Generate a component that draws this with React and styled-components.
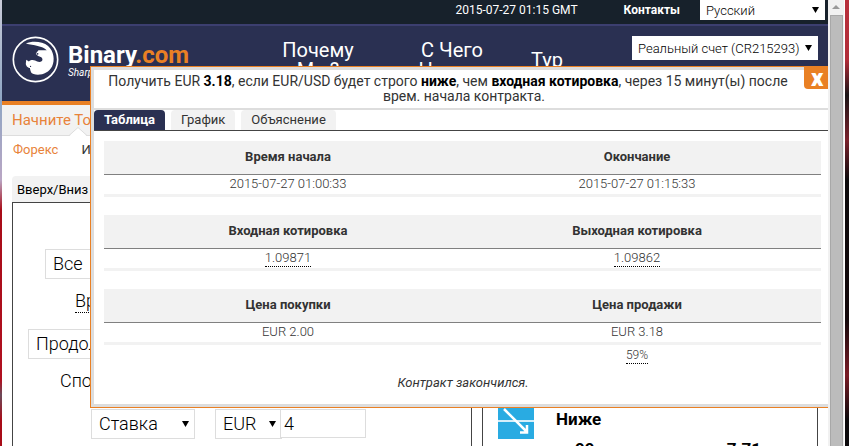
import React, { useState } from "react";
import styled, { createGlobalStyle } from "styled-components";

const GlobalStyle = createGlobalStyle`
  * {
    box-sizing: border-box;
  }
  body {
    margin: 0;
    overflow: hidden;
    font-family: Roboto, "Liberation Sans", sans-serif;
    font-weight: 300;
    color: #000;
  }
  button, select, input {
    font: inherit;
    color: inherit;
    margin: 0;
  }
`;

const Screen = styled.div`
  display: grid;
  grid-template-columns: 2px 1fr 17px 4px;
  height: 100vh;
`;

const LeftEdge = styled.div`
  background: linear-gradient(#c9cbd8 0, #8fa6c4 100px, #b9a6c4 180px, #a80c18 210px, #b01020 380px, #6b4a5a 395px, #a80c18 420px);
`;

const RightEdge = styled.div`
  background: linear-gradient(#b8303c 0, #b02c38 60px, #1a1416 95px, #7a222c 140px, #0c0a0c 180px, #14090c 320px, #7a1c26 375px, #0c0a0c 420px);
`;

const Scrollbar = styled.div`
  display: flex;
  flex-direction: column;
  align-items: center;
  background: #f1f1f1;
  border-right: 1px solid #fff;
`;

const ScrollArrow = styled.svg`
  width: 8px;
  height: 15px;
`;

const Thumb = styled.div`
  flex: 1;
  width: 13px;
  background: #bcbcbc;
  border: 1px solid #a8a8a8;
  border-bottom: 0;
`;

const Page = styled.div`
  position: relative;
  min-width: 0;
  overflow: hidden;
  background: #fff;
`;

const TopBar = styled.div`
  display: flex;
  justify-content: flex-end;
  align-items: center;
  height: 26px;
  padding: 0 3px 4px 0;
  background: #17212b;
  border-bottom: 2px solid #3c3f70;
  color: #fff;
  font-size: 12px;
`;

const Clock = styled.span`
  margin-right: 46px;
  font-weight: 400;
`;

const ContactLink = styled.a`
  margin-right: 20px;
  color: #fff;
  font-weight: 700;
  text-decoration: none;
`;

const SelectWrap = styled.span`
  position: relative;
  display: inline-flex;
  flex: none;
  width: ${(p) => p.$width}px;
  height: ${(p) => p.$height}px;
`;

const StyledSelect = styled.select`
  appearance: none;
  width: 100%;
  padding: 0 16px 0 ${(p) => (p.$large ? 7 : 5)}px;
  border: 1px solid ${(p) => (p.$large ? "#ddd" : "#fff")};
  border-radius: 0;
  background: #fff;
  color: #000;
  font-size: ${(p) => (p.$large ? 18 : 13)}px;
`;

const Caret = styled.svg`
  position: absolute;
  top: 50%;
  right: 6px;
  width: 7px;
  height: 6px;
  margin-top: -3px;
  pointer-events: none;
`;

const Header = styled.header`
  display: flex;
  align-items: flex-start;
  height: 79px;
  padding: 10px 10px 0;
  background: #2a3052;
  border-bottom: 4px solid #e98024;
  color: #fff;
`;

const Brand = styled.a`
  display: flex;
  gap: 9px;
  width: 239px;
  color: #fff;
  text-decoration: none;
`;

const BrandText = styled.div`
  padding-top: 7px;
`;

const BrandName = styled.div`
  font-size: 24px;
  line-height: 24px;
  font-weight: 700;

  span {
    color: #e98024;
  }
`;

const Tagline = styled.div`
  font-size: 10px;
  line-height: 12px;
  font-style: italic;
  font-weight: 400;
  white-space: nowrap;
`;

const Nav = styled.nav`
  display: flex;
  flex: 1;
  padding-top: 4px;
`;

const NavLink = styled.a`
  display: flex;
  align-items: center;
  justify-content: center;
  width: ${(p) => (p.$narrow ? 56 : 134)}px;
  min-height: 40px;
  color: #fff;
  font-size: 20px;
  font-weight: 400;
  line-height: 20px;
  text-align: center;
  text-decoration: none;
`;

const SubHeader = styled.div`
  height: 31px;
  padding: 0 10px;
  background: #f2f2f2;
  border-bottom: 1px solid #ddd;
  color: #e8833a;
  font-size: 15px;
  font-weight: 400;
  line-height: 30px;
`;

const Notch = styled.svg`
  display: block;
  width: 18px;
  height: 10px;
  margin: -9px 0 0 67px;
  position: relative;
`;

const Markets = styled.nav`
  display: flex;
  gap: 23px;
  padding: 3px 11px 0;
  height: 39px;
  font-size: 13px;
  font-weight: 400;
  line-height: 20px;

  a {
    color: #333;
    text-decoration: none;
  }
  a:first-child {
    color: #e8833a;
  }
`;

const FormTab = styled.button`
  display: block;
  height: 26px;
  margin-left: 10px;
  padding: 0 5px;
  border: 0;
  border-radius: 4px 4px 0 0;
  background: #f2f2f2;
  font-size: 13px;
  font-weight: 400;
`;

const Panels = styled.main`
  display: flex;
  gap: 10px;
  padding: 0 10px;
`;

const FormPanel = styled.form`
  flex: 1;
  height: 320px;
  padding: 46px 15px;
  border: 1px solid #444;
  font-size: 18px;
`;

const FormRow = styled.div`
  display: flex;
  align-items: flex-start;
  height: ${(p) => p.$height}px;
  padding-left: ${(p) => p.$indent}px;
  line-height: 24px;
`;

const DottedLabel = styled.label`
  height: 24px;
  border-bottom: 1px dotted #000;
`;

const AmountInput = styled.input`
  width: 86px;
  height: 29px;
  margin-left: -2px;
  padding: 0 3px;
  border: 1px solid #ddd;
  background: #fff;
  position: relative;
`;

const Gap = styled.span`
  width: 20px;
`;

const PricePanel = styled.section`
  width: 336px;
  height: 320px;
  padding: 200px 16px 0 15px;
  border: 1px solid #444;
`;

const PriceHead = styled.div`
  display: flex;
  gap: 22px;
  font-size: 17px;
  font-weight: 700;
  line-height: 32px;
`;

const PriceRow = styled.div`
  display: flex;
  justify-content: space-between;
  padding: 0 40px 0 77px;
  font-weight: 700;
  font-size: 17px;
  line-height: 20px;
`;

const Dialog = styled.section`
  position: absolute;
  top: 66px;
  left: 88px;
  right: 0;
  border: 1px solid #e98024;
  border-right: 0;
  background: #fff;
  color: #333;
  font-size: 13px;
`;

const DialogInner = styled.div`
  padding-bottom: 12px;
  border: 3px solid #ddd;
  border-right: 0;
`;

const Close = styled.button`
  float: right;
  width: 24px;
  height: 22px;
  margin: -3px 0 0 8px;
  padding: 0 0 0 7px;
  border: 0;
  border-radius: 0 0 0 4px;
  background: #e98024;
  color: #fff;
  font-size: 24px;
  font-weight: 900;
  line-height: 20px;
  text-align: left;
`;

const Message = styled.p`
  height: 38px;
  margin: 0;
  padding: 4px 0 0 6px;
  font-size: 14px;
  font-weight: 400;
  line-height: 15px;
  text-align: center;

  b {
    color: #000;
    font-weight: 700;
  }
`;

const Tabs = styled.div`
  display: flex;
  gap: 6px;
  border-top: 2px solid #ddd;
  border-bottom: 1px solid #444;
`;

const Tab = styled.button`
  height: 20px;
  padding: 0 10px;
  border: 0;
  border-radius: 4px 4px 0 0;
  background: ${(p) => (p.$active ? "#2a3052" : "#f2f2f2")};
  color: ${(p) => (p.$active ? "#fff" : "#333")};
  font-weight: ${(p) => (p.$active ? 700 : 400)};
  line-height: 20px;
`;

const Sheets = styled.div`
  display: flex;
  flex-direction: column;
  gap: 18px;
  padding: 10px 7px 0 10px;
`;

const Sheet = styled.table`
  width: 100%;
  table-layout: fixed;
  border-collapse: separate;
  border-spacing: 0;
  text-align: center;

  th {
    height: 34px;
    padding: 0 0 2px;
    background: #f2f2f2;
    border-bottom: 1px solid #808080;
    font-weight: 700;
  }
  td {
    height: 22px;
    padding: 0 0 1px;
    line-height: 18px;
    border-bottom: 3px solid #f2f2f2;
  }
  th:last-child, td:last-child {
    padding-right: 19px;
  }
`;

const Dotted = styled.span`
  display: inline-block;
  line-height: 16px;
  border-bottom: 1px dotted #000;
`;

const Return = styled.div`
  display: grid;
  grid-template-columns: 368px 1fr;
  height: 19px;
  margin-top: -18px;
  padding-top: 2px;
  padding-right: 19px;
  font-size: 12px;
  text-align: center;

  span {
    grid-column: 2;
    justify-self: center;
  }
`;

const Status = styled.p`
  margin: 10px 0 0;
  padding-left: 4px;
  font-weight: 400;
  line-height: 18px;
  font-style: italic;
  text-align: center;
`;

const sheets = [
  {
    heads: ["Время начала", "Окончание"],
    values: ["2015-07-27 01:00:33", "2015-07-27 01:15:33"],
  },
  {
    heads: ["Входная котировка", "Выходная котировка"],
    values: ["1.09871", "1.09862"],
    dotted: true,
  },
  {
    heads: ["Цена покупки", "Цена продажи"],
    values: ["EUR 2.00", "EUR 3.18"],
  },
];

const tabs = ["Таблица", "График", "Объяснение"];

function Select({ id, label, width, height, large, children }) {
  return (
    <SelectWrap $width={width} $height={height}>
      <StyledSelect id={id} aria-label={label} $large={large}>
        <option>{children}</option>
      </StyledSelect>
      <Caret viewBox="0 0 7 6">
        <path d="M0 0h7L3.500 6z" fill="#000" />
      </Caret>
    </SelectWrap>
  );
}

function Logo() {
  return (
    <svg width="47" height="47" viewBox="36 108 142 140">
      <circle cx="107" cy="178" r="67" fill="none" stroke="#fff" strokeWidth="5" />
      <path
        fill="#fff"
        d="M78 130C96 121 128 123 145 137C163 153 166 180 157 199C147 219 122 228 101 222C91 219 92 210 90 204C84 204 76 196 78 188L79 179L87 184C95 176 106 180 112 184C121 187 128 184 128 178C129 168 110 170 108 160L116 150L141 150C128 137 102 136 78 130Z"
      />
      <circle cx="113" cy="161" r="3" fill="#2a3052" />
      <circle cx="92" cy="199" r="2" fill="#2a3052" />
    </svg>
  );
}

function ContractDialog() {
  const [tab, setTab] = useState(tabs[0]);

  return (
    <Dialog role="dialog" aria-label="Контракт">
      <DialogInner>
        <Close type="button" aria-label="Закрыть">
          x
        </Close>
        <Message>
          Получить EUR <b>3.18</b>, если EUR/USD будет строго <b>ниже</b>, чем{" "}
          <b>входная котировка</b>, через 15 минут(ы) после врем. начала
          контракта.
        </Message>
        <Tabs role="tablist">
          {tabs.map((name) => (
            <Tab
              key={name}
              type="button"
              role="tab"
              aria-selected={name === tab}
              $active={name === tab}
              onClick={() => setTab(name)}
            >
              {name}
            </Tab>
          ))}
        </Tabs>
        <Sheets>
          {sheets.map((sheet) => (
            <Sheet key={sheet.heads[0]}>
              <colgroup>
                <col width="368" />
                <col />
              </colgroup>
              <thead>
                <tr>
                  {sheet.heads.map((head) => (
                    <th key={head}>{head}</th>
                  ))}
                </tr>
              </thead>
              <tbody>
                <tr>
                  {sheet.values.map((value) => (
                    <td key={value}>
                      {sheet.dotted ? <Dotted>{value}</Dotted> : value}
                    </td>
                  ))}
                </tr>
              </tbody>
            </Sheet>
          ))}
          <Return>
            <Dotted>59%</Dotted>
          </Return>
        </Sheets>
        <Status>Контракт закончился.</Status>
      </DialogInner>
    </Dialog>
  );
}

function App() {
  return (
    <>
      <GlobalStyle />
      <Screen>
        <LeftEdge />
        <Page>
          <TopBar>
            <Clock>2015-07-27 01:15 GMT</Clock>
            <ContactLink href="#contact">Контакты</ContactLink>
            <Select label="Язык" width={125} height={20}>
              Русский
            </Select>
          </TopBar>
          <Header>
            <Brand href="#home">
              <Logo />
              <BrandText>
                <BrandName>
                  Binary<span>.com</span>
                </BrandName>
                <Tagline>Sharp Prices. Smart Trading.</Tagline>
              </BrandText>
            </Brand>
            <Nav>
              <NavLink href="#why">
                Почему
                <br />
                Мы?
              </NavLink>
              <NavLink href="#start">
                С Чего
                <br />
                Начать
              </NavLink>
              <NavLink href="#tour" $narrow>
                Тур
              </NavLink>
            </Nav>
            <Select label="Счет" width={186} height={24}>
              Реальный счет (CR215293)
            </Select>
          </Header>
          <SubHeader>Начните Торговлю</SubHeader>
          <Notch viewBox="0 0 18 10">
            <path d="M0 9.500L9 .5L18 9.500V10H0z" fill="#fff" />
            <path d="M0 8.500L9 .5L18 8.500" fill="none" stroke="#ddd" />
          </Notch>
          <Markets>
            <a href="#forex">Форекс</a>
            <a href="#indices">Индексы</a>
          </Markets>
          <FormTab type="button">Вверх/Вниз</FormTab>
          <Panels>
            <FormPanel>
              <FormRow $indent={17} $height={40}>
                <Select label="Рынок" width={200} height={30} large>
                  Все
                </Select>
              </FormRow>
              <FormRow $indent={47} $height={40}>
                <DottedLabel htmlFor="start">Время начала</DottedLabel>
              </FormRow>
              <FormRow $indent={0} $height={40}>
                <Select id="start" label="Срок" width={200} height={30} large>
                  Продолжительность
                </Select>
              </FormRow>
              <FormRow $indent={32} $height={40}>
                Способ
              </FormRow>
              <FormRow $indent={63} $height={30}>
                <Select label="Способ" width={104} height={30} large>
                  Ставка
                </Select>
                <Gap />
                <Select label="Валюта" width={67} height={30} large>
                  EUR
                </Select>
                <AmountInput aria-label="Сумма" defaultValue="4" />
              </FormRow>
            </FormPanel>
            <PricePanel>
              <PriceHead>
                <svg width="36" height="36" viewBox="0 0 36 36">
                  <path d="M0 0h36v36H0z" fill="#29abe2" />
                  <path d="M0 18h36" stroke="#d4eefa" strokeWidth="2" />
                  <path
                    d="M6 6L29 29M29 22v7.500H22"
                    fill="none"
                    stroke="#fff"
                    strokeWidth="2.500"
                  />
                </svg>
                Ниже
              </PriceHead>
              <PriceRow>
                <span>99</span>
                <span>7.71</span>
              </PriceRow>
            </PricePanel>
          </Panels>
          <ContractDialog />
        </Page>
        <Scrollbar>
          <ScrollArrow viewBox="0 0 8 15">
            <path d="M0 9L4 5L8 9z" fill="#999" />
          </ScrollArrow>
          <Thumb />
        </Scrollbar>
        <RightEdge />
      </Screen>
    </>
  );
}

export default App;
